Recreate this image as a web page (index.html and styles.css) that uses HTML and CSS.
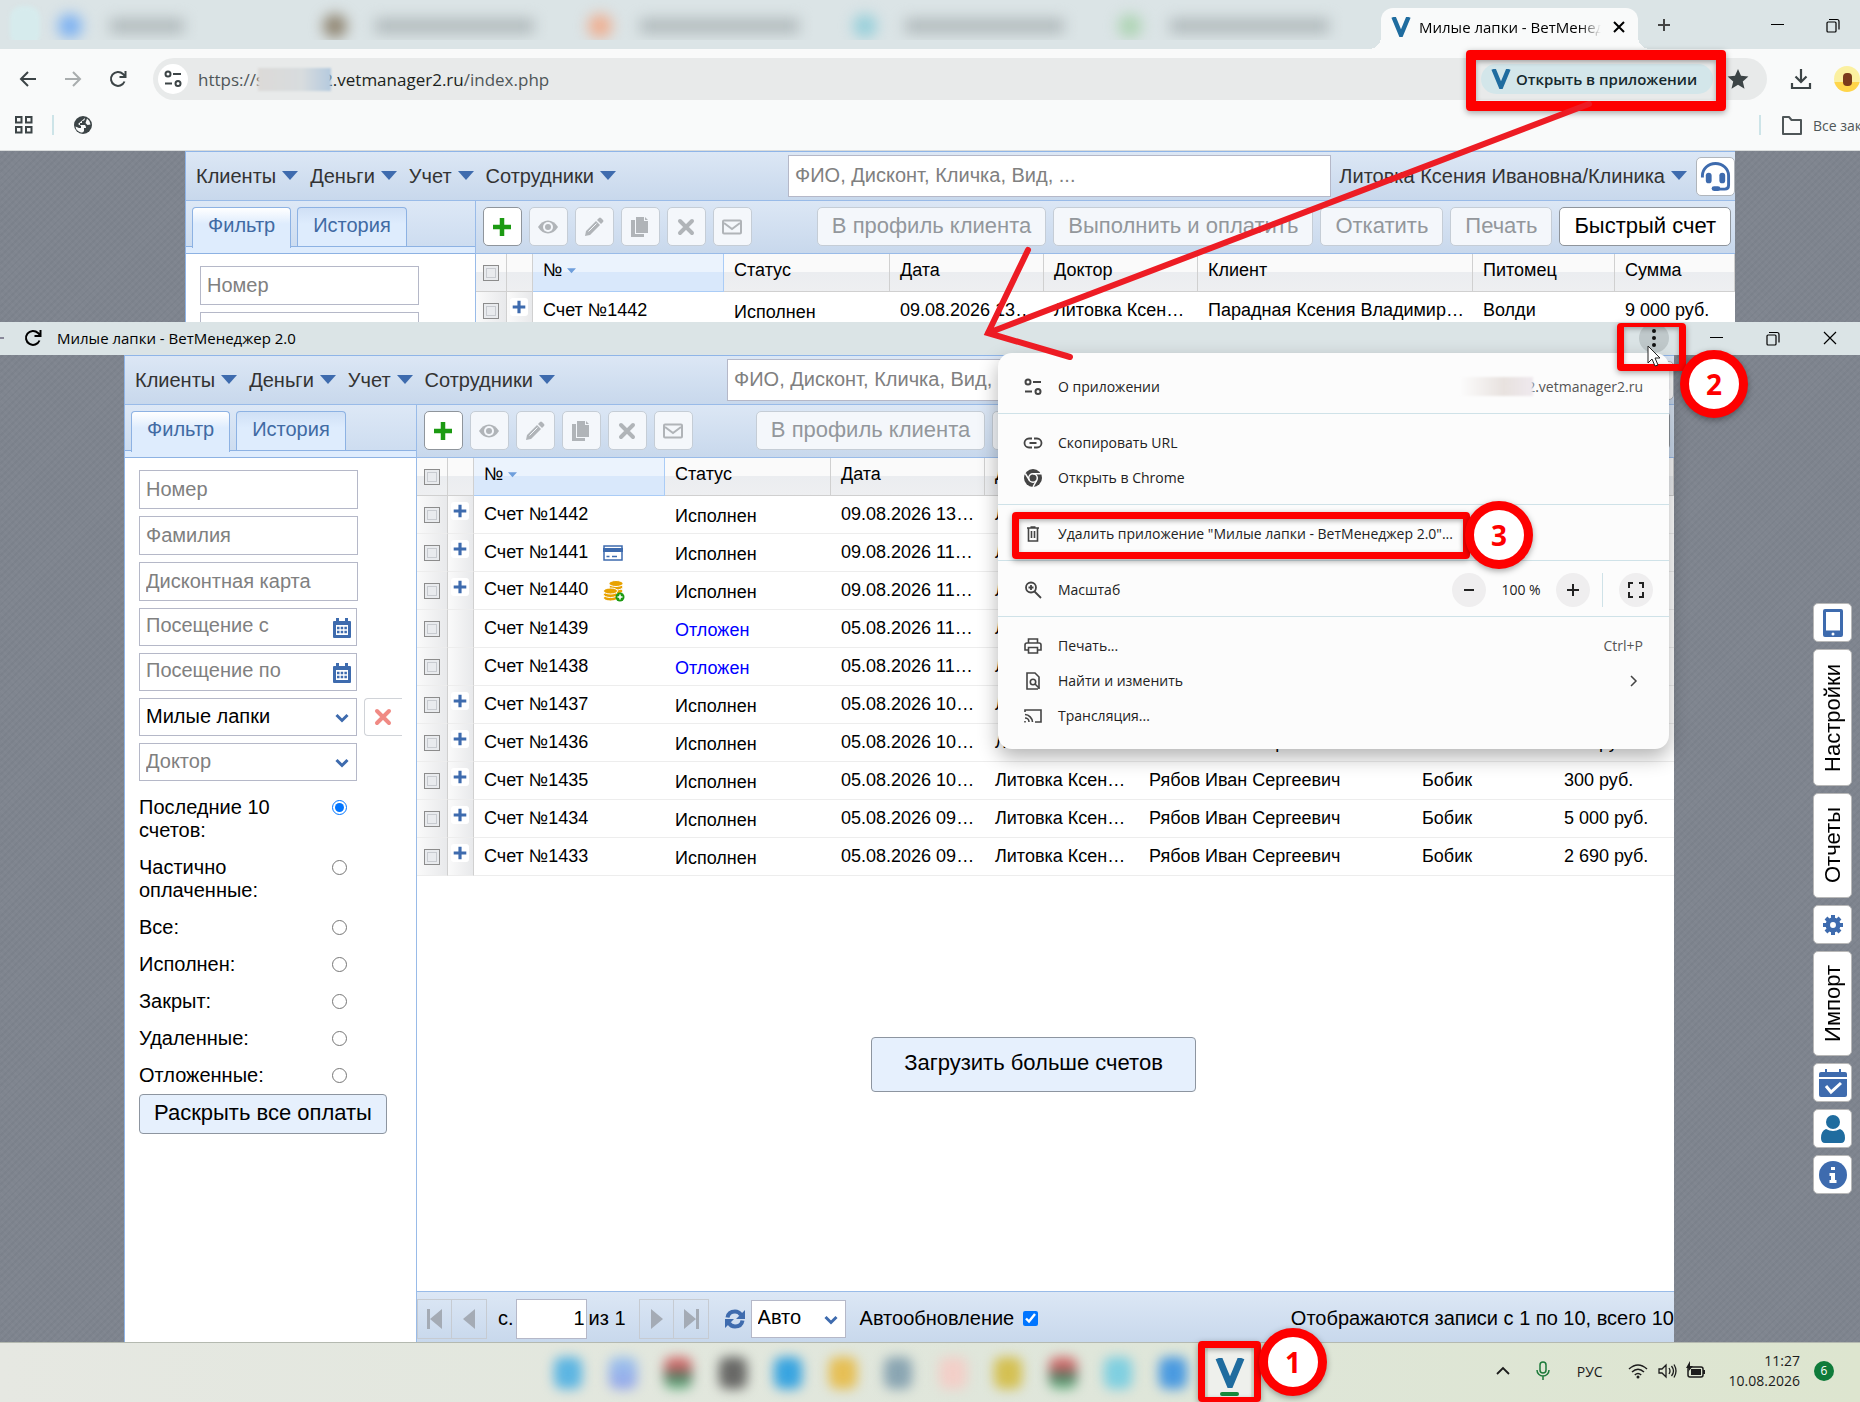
FILE: index.html
```html
<!DOCTYPE html>
<html lang="ru">
<head>
  <meta charset="UTF-8">
  <title>Милые лапки - ВетМенеджер 2.0</title>
  <meta name="viewport" content="width=device-width, initial-scale=1.0">
  <link rel="stylesheet" href="styles.css">
</head>
<body>

  <!-- Иконки -->
  <svg class="sprite" aria-hidden="true">
    <symbol id="i-logo" viewBox="0 0 20 20"><path d="M2.500 0 L10 18 L17.500 0" fill="none" stroke="#1f6c9f" stroke-width="4.500"/></symbol>
    <symbol id="i-back" viewBox="0 0 20 20"><path d="M18 10H3M10 3l-7 7 7 7" fill="none" stroke="currentColor" stroke-width="2"/></symbol>
    <symbol id="i-forward" viewBox="0 0 20 20"><path d="M2 10h15M10 3l7 7-7 7" fill="none" stroke="currentColor" stroke-width="2"/></symbol>
    <symbol id="i-reload" viewBox="0 0 20 20"><path d="M16.500 12.500A7 7 0 1 1 15 5l2 2M17.500 2v6h-6" fill="none" stroke="currentColor" stroke-width="2"/></symbol>
    <symbol id="i-tune" viewBox="0 0 20 20"><g fill="none" stroke="currentColor" stroke-width="2"><circle cx="5" cy="5" r="2.500"/><path d="M10 5h8M2 14.500h7"/><circle cx="15" cy="14.500" r="2.500"/></g></symbol>
    <symbol id="i-close" viewBox="0 0 20 20"><path d="M5 5l10 10M15 5L5 15" stroke="currentColor" stroke-width="2"/></symbol>
    <symbol id="i-plus" viewBox="0 0 20 20"><path d="M10 4v12M4 10h12" stroke="currentColor" stroke-width="2"/></symbol>
    <symbol id="i-minus" viewBox="0 0 20 20"><path d="M5 10h10" stroke="currentColor" stroke-width="2"/></symbol>
    <symbol id="i-min" viewBox="0 0 20 20"><path d="M4 9.500h13" stroke="currentColor"/></symbol>
    <symbol id="i-restore" viewBox="0 0 20 20"><g fill="none" stroke="currentColor" stroke-width="1.200"><rect x="4" y="7" width="9" height="10" rx="1"/><path d="M6 4.500h8q2 0 2 2v8"/></g></symbol>
    <symbol id="i-x" viewBox="0 0 20 20"><path d="M4 4l12 12M16 4L4 16" stroke="currentColor" stroke-width="1.200"/></symbol>
    <symbol id="i-star" viewBox="0 0 24 24"><path d="M12 2l3 6.800 7.400.7-5.600 4.900 1.700 7.300L12 17.800l-6.500 3.900 1.700-7.300L1.600 9.500 9 8.800z" fill="currentColor"/></symbol>
    <symbol id="i-download" viewBox="0 0 24 24"><path d="M12 2v13M6.500 9.500L12 15l5.500-5.500M3 16v5h18v-5" fill="none" stroke="currentColor" stroke-width="2.200"/></symbol>
    <symbol id="i-apps" viewBox="0 0 20 20"><g fill="none" stroke="currentColor" stroke-width="2"><rect x="2" y="2" width="5.500" height="5.500"/><rect x="12" y="2" width="5.500" height="5.500"/><rect x="2" y="12" width="5.500" height="5.500"/><rect x="12" y="12" width="5.500" height="5.500"/></g></symbol>
    <symbol id="i-globe" viewBox="0 0 20 20"><circle cx="10" cy="10" r="9" fill="currentColor"/><path d="M12 3q0 3-3 3v2H7v2h5q1 1 1 3h-2v3q-1 2-3 1.500-5-1.500-5.500-6L6 13h2v-2L5 9M14 3.500q3 2 3.500 6l-3 .5-2-2z" fill="#f9fafa"/></symbol>
    <symbol id="i-folder" viewBox="0 0 24 24"><path d="M3 4h6l2.500 3H21v14H3z" fill="none" stroke="currentColor" stroke-width="2" stroke-linejoin="round"/></symbol>
    <symbol id="i-tri" viewBox="0 0 16 10"><path d="M0 0h16L8 9z" fill="currentColor"/></symbol>
    <symbol id="i-headset" viewBox="0 0 32 32"><g fill="none" stroke="currentColor" stroke-width="3"><path d="M2.500 17v-2a13.500 12.500 0 0 1 27 0v10q0 4-4 4h-7"/></g><rect x="6" y="12" width="6" height="11" rx="3" fill="currentColor"/><rect x="20" y="12" width="6" height="11" rx="3" fill="currentColor"/><rect x="12" y="26" width="9" height="5" rx="2.500" fill="currentColor"/></symbol>
    <symbol id="i-add" viewBox="0 0 20 20"><path d="M10 1v18M1 10h18" stroke="currentColor" stroke-width="4.500"/></symbol>
    <symbol id="i-eye" viewBox="0 0 20 20"><path d="M0 10Q4 3.500 10 3.500T20 10Q16 16.500 10 16.500T0 10z" fill="currentColor"/><circle cx="10" cy="10" r="5" fill="#f4f7fb"/><circle cx="10" cy="10" r="3" fill="currentColor"/></symbol>
    <symbol id="i-pencil" viewBox="0 0 20 20"><path d="M1 19l1-5L12 4l4 4L6 18zM13 3l2-2q1-1 2 0l2 2q1 1 0 2l-2 2z" fill="currentColor"/><path d="M4.500 14.500l8-8" stroke="#f4f7fb"/></symbol>
    <symbol id="i-copy" viewBox="0 0 20 20"><path d="M6 0h8v4h4v12H6z" fill="currentColor"/><path d="M15 0l3 3h-3zM1 3h4v14h9v3H1z" fill="currentColor"/></symbol>
    <symbol id="i-del" viewBox="0 0 20 20"><path d="M4 4l12 12M16 4L4 16" stroke="currentColor" stroke-width="4" stroke-linecap="round"/></symbol>
    <symbol id="i-mail" viewBox="0 0 20 20"><rect x="1" y="3.500" width="18" height="13" rx="1" fill="none" stroke="currentColor" stroke-width="2"/><path d="M2 6l8 6 8-6" fill="none" stroke="currentColor" stroke-width="2"/></symbol>
    <symbol id="i-cal" viewBox="0 0 20 20"><path d="M1 4q0-1 1-1h2V0h3v3h6V0h3v3h2q1 0 1 1v15q0 1-1 1H2q-1 0-1-1z" fill="currentColor"/><path d="M4 7h12v10H4z" fill="#fff"/><path d="M5 10h10M5 14h10" stroke="currentColor" stroke-width="2.500" stroke-dasharray="2.500 1.200"/></symbol>
    <symbol id="i-chev" viewBox="0 0 14 10"><path d="M1.500 2L7 7.500 12.500 2" fill="none" stroke="currentColor" stroke-width="3"/></symbol>
    <symbol id="i-card" viewBox="0 0 20 16"><path d="M1 1h18v14H1z" fill="#fff" stroke="currentColor" stroke-width="1.500"/><path d="M0 3h20v4H0z" fill="currentColor"/><path d="M3.500 11.500h3M9 11.500h5" stroke="currentColor" stroke-width="1.500"/></symbol>
    <symbol id="i-coins" viewBox="0 0 22 22"><g fill="#e8a200" stroke="#fff"><ellipse cx="13" cy="11" rx="7" ry="3"/><ellipse cx="13" cy="7" rx="7" ry="3"/><ellipse cx="13" cy="3.500" rx="7" ry="3"/><ellipse cx="7.500" cy="18" rx="7" ry="3"/><ellipse cx="7.500" cy="14.500" rx="7" ry="3"/><ellipse cx="7.500" cy="11" rx="7" ry="3"/></g><circle cx="17" cy="17" r="4.500" fill="#1c9a12"/><path d="M17 14.500v5M14.500 17h5" stroke="#fff" stroke-width="1.500"/></symbol>
    <symbol id="i-link" viewBox="0 0 20 20"><path d="M9 5.500H6a4.500 4.500 0 0 0 0 9h3M11 5.500h3a4.500 4.500 0 0 1 0 9h-3M6.500 10h7" fill="none" stroke="currentColor" stroke-width="1.800"/></symbol>
    <symbol id="i-chrome" viewBox="0 0 20 20"><circle cx="10" cy="10" r="9" fill="currentColor"/><circle cx="10" cy="10" r="4.300" fill="none" stroke="#fcfcfc" stroke-width="1.500"/><path d="M10 5.700h8M6.300 12.100L2.300 5.500M13.700 12.100L10 19" stroke="#fcfcfc" stroke-width="1.500"/></symbol>
    <symbol id="i-trash" viewBox="0 0 20 20"><g fill="none" stroke="currentColor" stroke-width="1.600"><path d="M4 4h12M7.500 3h5M5.500 4v13h9V4M8.500 7v7M11.500 7v7"/></g></symbol>
    <symbol id="i-zoom" viewBox="0 0 20 20"><g fill="none" stroke="currentColor" stroke-width="1.800"><circle cx="8" cy="7.500" r="5"/><path d="M11.500 11.500L18 18M8 5v5M5.500 7.500h5"/></g></symbol>
    <symbol id="i-full" viewBox="0 0 20 20"><path d="M3 8V3h4M13 3h4v5M17 12v5h-4M7 17H3v-5" fill="none" stroke="currentColor" stroke-width="2"/></symbol>
    <symbol id="i-print" viewBox="0 0 20 20"><g fill="none" stroke="currentColor" stroke-width="1.600"><path d="M5.500 7V3h9v4M5 14H2V9q0-2 2-2h12q2 0 2 2v5h-3"/><path d="M5.500 11.500h9V17h-9z"/></g></symbol>
    <symbol id="i-find" viewBox="0 0 20 20"><g fill="none" stroke="currentColor" stroke-width="1.600"><path d="M15 18H4V2h8l4 4v12"/><circle cx="10" cy="11" r="2.700"/><path d="M12 13l4 4"/></g></symbol>
    <symbol id="i-cast" viewBox="0 0 20 20"><path d="M2 6V4h16v12h-6M2 8.500a8 8 0 0 1 7.500 7.500M2 12a4 4 0 0 1 4 4M2 15v1.500" fill="none" stroke="currentColor" stroke-width="1.600"/></symbol>
    <symbol id="i-phone" viewBox="0 0 20 28"><path fill-rule="evenodd" d="M2 0h16q2 0 2 2v24q0 2-2 2H2q-2 0-2-2V2q0-2 2-2zM3 3v18.500h14V3zM10 23.500a1.500 1.500 0 1 0 0 3 1.500 1.500 0 1 0 0-3z" fill="currentColor"/></symbol>
    <symbol id="i-gear" viewBox="0 0 20 20"><circle cx="10" cy="10" r="5.200" fill="none" stroke="currentColor" stroke-width="4.500"/><path d="M10 0v4M10 16v4M0 10h4M16 10h4M3 3l3 3M14 14l3 3M17 3l-3 3M6 14l-3 3" stroke="currentColor" stroke-width="4"/></symbol>
    <symbol id="i-calcheck" viewBox="0 0 28 28"><path d="M0 8V5q0-2 2-2h4V0h2v3h12V0h2v3h4q2 0 2 2v3zM0 10h28v16q0 2-2 2H2q-2 0-2-2z" fill="currentColor"/><path d="M7 17l5 6 10-9" fill="none" stroke="#fff" stroke-width="3"/></symbol>
    <symbol id="i-user" viewBox="0 0 24 28"><circle cx="12" cy="7" r="7" fill="currentColor"/><path d="M5 14q7 4 14 0 5 2 5 9 0 5-4 5H4q-4 0-4-5 0-7 5-9z" fill="currentColor"/></symbol>
    <symbol id="i-info" viewBox="0 0 28 28"><circle cx="14" cy="14" r="14" fill="currentColor"/><path d="M12 6h4v3h-4zM10.500 12H16v7h1.500v3h-7v-3H12v-4h-1.500z" fill="#fff"/></symbol>
    <symbol id="i-first" viewBox="0 0 20 20"><path d="M2 0h3v20H2zM17 0v20L5 10z" fill="currentColor"/></symbol>
    <symbol id="i-prev" viewBox="0 0 20 20"><path d="M16 0v20L4 10z" fill="currentColor"/></symbol>
    <symbol id="i-next" viewBox="0 0 20 20"><path d="M4 0v20l12-10z" fill="currentColor"/></symbol>
    <symbol id="i-last" viewBox="0 0 20 20"><path d="M15 0h3v20h-3zM3 0v20l12-10z" fill="currentColor"/></symbol>
    <symbol id="i-sync" viewBox="0 0 20 20"><path d="M2.500 8.500q1-6 7.500-6 4 0 6 3.500M17.500 11.500q-1 6-7.500 6-4 0-6-3.500" fill="none" stroke="currentColor" stroke-width="4"/><path d="M20 1v9h-9zM0 19v-9h9z" fill="currentColor"/></symbol>
    <symbol id="i-up" viewBox="0 0 20 20"><path d="M4 13l6-6 6 6" fill="none" stroke="currentColor" stroke-width="1.800"/></symbol>
    <symbol id="i-mic" viewBox="0 0 20 20"><g fill="none" stroke="currentColor" stroke-width="1.500"><rect x="7" y="1" width="6" height="11" rx="3"/><path d="M4 9a6 6 0 0 0 12 0M10 15v4"/></g></symbol>
    <symbol id="i-wifi" viewBox="0 0 20 20"><g fill="none" stroke="currentColor" stroke-width="1.500"><path d="M1 8q9-8 18 0M4 11q6-5.500 12 0M6.800 14q3.200-3 6.400 0"/></g><circle cx="10" cy="16" r="1.500" fill="currentColor"/></symbol>
    <symbol id="i-vol" viewBox="0 0 20 20"><path d="M2 8v4h3l4 4V4L5 8zM12 7q2 3 0 6M14.500 5q4 5 0 10M17 3.500q4 6.500 0 13" fill="none" stroke="currentColor" stroke-width="1.300"/></symbol>
    <symbol id="i-bat" viewBox="0 0 20 20"><rect x="2" y="6" width="15" height="10" rx="2" fill="none" stroke="currentColor" stroke-width="1.500"/><path d="M5 8h10v6H5zM17 9h2v4h-2zM4 0L0 7h3l-1 4 5-6H4z" fill="currentColor"/></symbol>
  </svg>

  <!-- Окно браузера -->
  <header class="tabstrip">
    <div class="blurred-tabs">
      <span class="tab-search"></span>
      <span class="ghost blue"><i></i><b></b></span>
      <span class="ghost brown"><i></i><b></b></span>
      <span class="ghost orange"><i></i><b></b></span>
      <span class="ghost teal"><i></i><b></b></span>
      <span class="ghost green"><i></i><b></b></span>
    </div>
    <div class="tab">
      <svg class="logo"><use href="#i-logo"/></svg>
      <span class="tab-title">Милые лапки - ВетМенеджер 2.0</span>
      <button class="plain" aria-label="Закрыть вкладку"><svg class="ico"><use href="#i-close"/></svg></button>
    </div>
    <button class="plain new-tab" aria-label="Новая вкладка"><svg class="ico"><use href="#i-plus"/></svg></button>
    <div class="win-buttons">
      <button class="plain" aria-label="Свернуть"><svg class="ico"><use href="#i-min"/></svg></button>
      <button class="plain" aria-label="Восстановить"><svg class="ico"><use href="#i-restore"/></svg></button>
    </div>
  </header>

  <div class="toolbar">
    <button class="plain" aria-label="Назад"><svg class="ico"><use href="#i-back"/></svg></button>
    <button class="plain off" aria-label="Вперед"><svg class="ico"><use href="#i-forward"/></svg></button>
    <button class="plain" aria-label="Обновить"><svg class="ico"><use href="#i-reload"/></svg></button>
    <div class="omnibox">
      <button class="site-info" aria-label="Сведения о сайте"><svg class="ico"><use href="#i-tune"/></svg></button>
      <div class="url"><span>https://s</span><span class="smudge"></span><b>2.vetmanager2.ru</b><span>/index.php</span></div>
      <button class="chip">
        <svg class="logo"><use href="#i-logo"/></svg>Открыть в приложении
        <span class="frame frame-chip"></span>
      </button>
      <button class="plain" aria-label="Закладка"><svg class="ico-l"><use href="#i-star"/></svg></button>
    </div>
    <button class="plain download" aria-label="Загрузки"><svg class="ico-l"><use href="#i-download"/></svg></button>
    <span class="avatar"><i></i></span>
  </div>

  <div class="bookmarks">
    <button class="plain" aria-label="Приложения"><svg class="ico"><use href="#i-apps"/></svg></button>
    <span class="vline"></span>
    <button class="plain" aria-label="Сайт"><svg class="ico"><use href="#i-globe"/></svg></button>
    <span class="vline last"></span>
    <a href="#" class="all-marks"><svg class="ico-l"><use href="#i-folder"/></svg>Все закладки</a>
  </div>

  <section class="page page-back">
    <div class="app">
      <div class="menubar">
        <nav class="menu">
          <a href="#">Клиенты<svg class="tri"><use href="#i-tri"/></svg></a>
          <a href="#">Деньги<svg class="tri"><use href="#i-tri"/></svg></a>
          <a href="#">Учет<svg class="tri"><use href="#i-tri"/></svg></a>
          <a href="#">Сотрудники<svg class="tri"><use href="#i-tri"/></svg></a>
        </nav>
        <input class="search" type="text" aria-label="Поиск" placeholder="ФИО, Дисконт, Кличка, Вид, ...">
        <a href="#" class="user">Литовка Ксения Ивановна/Клиника<svg class="tri"><use href="#i-tri"/></svg></a>
        <button class="support" aria-label="Поддержка"><svg><use href="#i-headset"/></svg></button>
      </div>
      <div class="app-body">
        <aside class="side">
          <div class="side-tabs">
            <button class="active">Фильтр</button>
            <button>История</button>
          </div>
          <form class="filter">
            <input class="field" type="text" aria-label="Номер" placeholder="Номер">
            <input class="field" type="text" aria-label="Фамилия">
          </form>
        </aside>
        <main class="main">
          <div class="actions">
            <button class="sq add" aria-label="Добавить"><svg class="ico"><use href="#i-add"/></svg></button>
            <button class="sq" disabled aria-label="Просмотр"><svg class="ico"><use href="#i-eye"/></svg></button>
            <button class="sq" disabled aria-label="Изменить"><svg class="ico"><use href="#i-pencil"/></svg></button>
            <button class="sq" disabled aria-label="Копировать"><svg class="ico"><use href="#i-copy"/></svg></button>
            <button class="sq" disabled aria-label="Удалить"><svg class="ico"><use href="#i-del"/></svg></button>
            <button class="sq" disabled aria-label="Письмо"><svg class="ico"><use href="#i-mail"/></svg></button>
            <div class="actions-right">
              <button disabled>В профиль клиента</button>
              <button disabled>Выполнить и оплатить</button>
              <button disabled>Откатить</button>
              <button disabled>Печать</button>
              <button>Быстрый счет</button>
            </div>
          </div>
          <table class="grid" data-rows="1"></table>
        </main>
      </div>
    </div>
  </section>

  <!-- Окно приложения -->
  <section class="pwa">
    <div class="titlebar">
      <span class="dash"></span>
      <button class="plain" aria-label="Обновить"><svg class="ico"><use href="#i-reload"/></svg></button>
      <span class="title">Милые лапки - ВетМенеджер 2.0</span>
      <button class="dots" aria-label="Меню">
        <i></i><i></i><i></i>
        <span class="frame frame-dots"></span>
        <span class="num num-2">2</span>
        <svg class="cursor" viewBox="0 0 14 22"><path d="M1 1v17l4-4 3 7 3-1-3-7h5z" fill="#fff" stroke="#222"/></svg>
      </button>
      <button class="plain" aria-label="Свернуть"><svg class="ico"><use href="#i-min"/></svg></button>
      <button class="plain" aria-label="Восстановить"><svg class="ico"><use href="#i-restore"/></svg></button>
      <button class="plain" aria-label="Закрыть"><svg class="ico"><use href="#i-x"/></svg></button>
    </div>

    <div class="popup">
      <ul>
        <li><svg class="ico"><use href="#i-tune"/></svg>О приложении<span class="hint"><span class="smudge"></span>2.vetmanager2.ru</span></li>
      </ul>
      <ul>
        <li><svg class="ico"><use href="#i-link"/></svg>Скопировать URL</li>
        <li><svg class="ico"><use href="#i-chrome"/></svg>Открыть в Chrome</li>
      </ul>
      <ul>
        <li><svg class="ico"><use href="#i-trash"/></svg>Удалить приложение "Милые лапки - ВетМенеджер 2.0"...
          <span class="frame frame-item"></span><span class="num num-3">3</span></li>
      </ul>
      <ul>
        <li><svg class="ico"><use href="#i-zoom"/></svg>Масштаб
          <span class="zoom">
            <button aria-label="Уменьшить"><svg class="ico"><use href="#i-minus"/></svg></button>
            <span>100 %</span>
            <button aria-label="Увеличить"><svg class="ico"><use href="#i-plus"/></svg></button>
            <span class="zoom-line"></span>
            <button aria-label="Во весь экран"><svg class="ico"><use href="#i-full"/></svg></button>
          </span></li>
      </ul>
      <ul>
        <li><svg class="ico"><use href="#i-print"/></svg>Печать...<span class="hint">Ctrl+P</span></li>
        <li><svg class="ico"><use href="#i-find"/></svg>Найти и изменить<svg class="more" viewBox="0 0 10 12"><path d="M2 1l5 5-5 5" fill="none" stroke="#444" stroke-width="1.500"/></svg></li>
        <li><svg class="ico"><use href="#i-cast"/></svg>Трансляция...</li>
      </ul>
    </div>

    <div class="page page-front">
      <div class="app">
        <div class="menubar">
          <nav class="menu">
            <a href="#">Клиенты<svg class="tri"><use href="#i-tri"/></svg></a>
            <a href="#">Деньги<svg class="tri"><use href="#i-tri"/></svg></a>
            <a href="#">Учет<svg class="tri"><use href="#i-tri"/></svg></a>
            <a href="#">Сотрудники<svg class="tri"><use href="#i-tri"/></svg></a>
          </nav>
          <input class="search" type="text" aria-label="Поиск" placeholder="ФИО, Дисконт, Кличка, Вид, ...">
          <a href="#" class="user">Литовка Ксения Ивановна/Клиника<svg class="tri"><use href="#i-tri"/></svg></a>
          <button class="support" aria-label="Поддержка"><svg><use href="#i-headset"/></svg></button>
        </div>
        <div class="app-body">
          <aside class="side">
            <div class="side-tabs">
              <button class="active">Фильтр</button>
              <button>История</button>
            </div>
            <form class="filter">
              <input class="field" type="text" aria-label="Номер" placeholder="Номер">
              <input class="field" type="text" aria-label="Фамилия" placeholder="Фамилия">
              <input class="field" type="text" aria-label="Дисконтная карта" placeholder="Дисконтная карта">
              <div class="combo"><input class="field" type="text" aria-label="Посещение с" placeholder="Посещение с"><svg class="cal"><use href="#i-cal"/></svg></div>
              <div class="combo"><input class="field" type="text" aria-label="Посещение по" placeholder="Посещение по"><svg class="cal"><use href="#i-cal"/></svg></div>
              <div class="clinic">
                <div class="combo"><select class="field" aria-label="Клиника"><option>Милые лапки</option></select><svg class="chev"><use href="#i-chev"/></svg></div>
                <button type="button" class="clear" aria-label="Сбросить"><svg class="ico"><use href="#i-del"/></svg></button>
              </div>
              <div class="combo"><select class="field empty" aria-label="Доктор"><option>Доктор</option></select><svg class="chev"><use href="#i-chev"/></svg></div>
              <div class="radios">
                <label><span>Последние 10 счетов:</span><input type="radio" name="state" checked></label>
                <label><span>Частично оплаченные:</span><input type="radio" name="state"></label>
                <label><span>Все:</span><input type="radio" name="state"></label>
                <label><span>Исполнен:</span><input type="radio" name="state"></label>
                <label><span>Закрыт:</span><input type="radio" name="state"></label>
                <label><span>Удаленные:</span><input type="radio" name="state"></label>
                <label><span>Отложенные:</span><input type="radio" name="state"></label>
              </div>
              <button type="button" class="expand-all">Раскрыть все оплаты</button>
            </form>
          </aside>
          <main class="main">
            <div class="actions">
              <button class="sq add" aria-label="Добавить"><svg class="ico"><use href="#i-add"/></svg></button>
              <button class="sq" disabled aria-label="Просмотр"><svg class="ico"><use href="#i-eye"/></svg></button>
              <button class="sq" disabled aria-label="Изменить"><svg class="ico"><use href="#i-pencil"/></svg></button>
              <button class="sq" disabled aria-label="Копировать"><svg class="ico"><use href="#i-copy"/></svg></button>
              <button class="sq" disabled aria-label="Удалить"><svg class="ico"><use href="#i-del"/></svg></button>
              <button class="sq" disabled aria-label="Письмо"><svg class="ico"><use href="#i-mail"/></svg></button>
              <div class="actions-right">
                <button disabled>В профиль клиента</button>
                <button disabled>Выполнить и оплатить</button>
                <button disabled>Откатить</button>
                <button disabled>Печать</button>
                <button>Быстрый счет</button>
              </div>
            </div>
            <table class="grid" data-rows="10"></table>
            <div class="load-more"><button>Загрузить больше счетов</button></div>
            <div class="pager">
              <button class="pg" disabled aria-label="Первая"><svg class="ico"><use href="#i-first"/></svg></button>
              <button class="pg" disabled aria-label="Назад"><svg class="ico"><use href="#i-prev"/></svg></button>
              <label class="pg-label" for="pg">с.</label>
              <input id="pg" type="text" value="1">
              <span class="pg-of">из 1</span>
              <button class="pg" disabled aria-label="Вперед"><svg class="ico"><use href="#i-next"/></svg></button>
              <button class="pg" disabled aria-label="Последняя"><svg class="ico"><use href="#i-last"/></svg></button>
              <button class="plain sync" aria-label="Обновить"><svg class="ico"><use href="#i-sync"/></svg></button>
              <div class="combo auto"><select class="field" aria-label="Интервал"><option>Авто</option></select><svg class="chev"><use href="#i-chev"/></svg></div>
              <label class="auto-label">Автообновление<input type="checkbox" checked></label>
              <span class="total">Отображаются записи с 1 по 10, всего 10</span>
            </div>
          </main>
        </div>
      </div>
      <div class="rail">
        <button aria-label="Мобильная версия"><svg class="w20"><use href="#i-phone"/></svg></button>
        <button class="r-settings"><span>Настройки</span></button>
        <button class="r-text"><span>Отчеты</span></button>
        <button aria-label="Сервис"><svg class="w20"><use href="#i-gear"/></svg></button>
        <button class="r-text"><span>Импорт</span></button>
        <button aria-label="Календарь"><svg><use href="#i-calcheck"/></svg></button>
        <button aria-label="Профиль" class="teal"><svg><use href="#i-user"/></svg></button>
        <button aria-label="Справка"><svg><use href="#i-info"/></svg></button>
      </div>
    </div>
  </section>

  <!-- Панель задач -->
  <footer class="taskbar">
    <div class="task-icons">
      <i class="c1"></i><i class="c2"></i><i class="c3"></i><i class="c4"></i><i class="c5"></i><i class="c6"></i>
      <i class="c7"></i><i class="c8"></i><i class="c9"></i><i class="c3"></i><i class="c10"></i><i class="c11"></i>
    </div>
    <button class="task-app" aria-label="ВетМенеджер">
      <svg><use href="#i-logo"/></svg><span class="bar"></span>
      <span class="frame frame-task"></span><span class="num num-1">1</span>
    </button>
    <div class="tray">
      <svg class="ico"><use href="#i-up"/></svg>
      <svg class="ico mic"><use href="#i-mic"/></svg>
      <span class="lang">РУС</span>
      <svg class="ico"><use href="#i-wifi"/></svg>
      <svg class="ico"><use href="#i-vol"/></svg>
      <svg class="ico"><use href="#i-bat"/></svg>
      <span class="clock">11:27<br>10.08.2026</span>
      <span class="badge">6</span>
    </div>
  </footer>

  <svg class="arrow" viewBox="0 0 620 270"><path d="M611 14L10 243M50 160L10 243l82 24"/></svg>

  <script>
    // счета: номер, статус, дата, клиент, питомец, сумма, иконка
    const bills = [
      [1442, 'Исполнен', '09.08.2026 13:20', 'Парадная Ксения Владимировна', 'Волди', '9 000 руб.'],
      [1441, 'Исполнен', '09.08.2026 11:52', 'Парадная Ксения Владимировна', 'Волди', '1 200 руб.', 'card'],
      [1440, 'Исполнен', '09.08.2026 11:40', 'Парадная Ксения Владимировна', 'Волди', '700 руб.', 'coins'],
      [1439, 'Отложен',  '05.08.2026 11:31', 'Рябов Иван Сергеевич', 'Бобик', '500 руб.'],
      [1438, 'Отложен',  '05.08.2026 11:12', 'Рябов Иван Сергеевич', 'Бобик', '500 руб.'],
      [1437, 'Исполнен', '05.08.2026 10:48', 'Рябов Иван Сергеевич', 'Бобик', '450 руб.'],
      [1436, 'Исполнен', '05.08.2026 10:30', 'Рябов Иван Сергеевич', 'Бобик', '300 руб.'],
      [1435, 'Исполнен', '05.08.2026 10:15', 'Рябов Иван Сергеевич', 'Бобик', '300 руб.'],
      [1434, 'Исполнен', '05.08.2026 09:50', 'Рябов Иван Сергеевич', 'Бобик', '5 000 руб.'],
      [1433, 'Исполнен', '05.08.2026 09:30', 'Рябов Иван Сергеевич', 'Бобик', '2 690 руб.']
    ];

    const head = `<colgroup><col class="c-check"><col class="c-exp"><col class="c-num"><col class="c-status">
      <col class="c-date"><col class="c-date"><col><col class="c-pet"><col class="c-sum"></colgroup>
      <thead><tr><th><input type="checkbox" aria-label="Выбрать все"></th><th></th>
      <th class="sorted">№<svg><use href="#i-tri"/></svg></th><th>Статус</th><th>Дата</th><th>Доктор</th>
      <th>Клиент</th><th>Питомец</th><th>Сумма</th></tr></thead>`;

    function row([num, status, date, client, pet, sum, icon]) {
      const later = status === 'Отложен';
      const plus = later ? '' : '<button class="exp" aria-label="Раскрыть"><svg><use href="#i-add"/></svg></button>';
      const mark = icon ? `<svg class="${icon}"><use href="#i-${icon}"/></svg>` : '';
      return `<tr><td class="tool"><input type="checkbox" aria-label="Счет ${num}"></td><td class="tool">${plus}</td>
        <td>Счет №${num}${mark}</td><td class="status${later ? ' later' : ''}">${status}</td><td>${date}</td>
        <td>Литовка Ксения Ивановна</td><td class="client">${client}</td><td>${pet}</td><td>${sum}</td></tr>`;
    }

    document.querySelectorAll('.grid').forEach(t => {
      t.innerHTML = head + '<tbody>' + bills.slice(0, t.dataset.rows).map(row).join('') + '</tbody>';
    });
  </script>

</body>
</html>
```
FILE: styles.css
```css
* { box-sizing: border-box; }
body {
  margin: 0;
  min-height: 100vh;
  display: flex;
  flex-direction: column;
  position: relative;
  overflow-x: hidden;
  font-family: "Liberation Sans", Arial, sans-serif;
  font-size: 20px;
  color: #000;
  background: #7f858f;
}
button, input, select { font-family: inherit; font-size: inherit; color: inherit; margin: 0; }
button { cursor: pointer; }
a { color: inherit; text-decoration: none; }
svg { display: block; flex: none; }
.sprite { position: absolute; width: 0; height: 0; }
.ico { width: 20px; height: 20px; }
.ico-l { width: 24px; height: 24px; }
.logo { width: 20px; height: 20px; }
.plain { border: 0; padding: 0; background: none; display: flex; flex: none; }

/* Вкладки браузера */
.tabstrip {
  height: 49px;
  display: flex;
  align-items: center;
  background: #dbe4e6;
  font-family: "Open Sans", sans-serif;
  font-size: 15px;
}
.blurred-tabs {
  flex: 1;
  height: 40px;
  align-self: flex-start;
  overflow: hidden;
  display: flex;
  align-items: center;
  padding: 12px 0 0 10px;
}
.tab-search { width: 30px; height: 40px; margin-right: 16px; border-radius: 12px; background: #d6ebed; filter: blur(2px); }
.ghost { flex: 1; display: flex; align-items: center; gap: 28px; filter: blur(7px); }
.ghost i { width: 24px; height: 24px; margin-left: 2px; border-radius: 50%; background: #7ab0f2; }
.ghost b { width: 60%; height: 16px; background: #b3bcbe; }
.ghost.blue b { width: 28%; }
.ghost.brown i { background: #8f8470; }
.ghost.orange i { background: #efae90; }
.ghost.teal i { background: #97cfda; }
.ghost.green i { background: #aed4b4; }
.tab {
  position: relative;
  width: 257px;
  height: 41px;
  align-self: flex-end;
  display: flex;
  align-items: center;
  gap: 8px;
  padding: 0 9px 4px 10px;
  border-radius: 12px 12px 0 0;
  background: #f9fafa;
}
.tab::before, .tab::after {
  content: '';
  position: absolute;
  bottom: 0;
  width: 12px;
  height: 12px;
}
.tab::before { left: -12px; background: radial-gradient(circle at 0 0, transparent 12px, #f9fafa 12px); }
.tab::after { right: -12px; background: radial-gradient(circle at 100% 0, transparent 12px, #f9fafa 12px); }
.tab-title {
  flex: 1;
  white-space: nowrap;
  overflow: hidden;
  mask-image: linear-gradient(90deg, #000 88%, transparent);
}
.new-tab { margin-left: 16px; color: #444; }
.win-buttons { margin: 0 17px 0 auto; padding-left: 93px; display: flex; gap: 36px; }

/* Адресная строка */
.toolbar {
  display: flex;
  align-items: center;
  padding: 9px 0 0 18px;
  background: #f9fafa;
  color: #3c4446;
}
.toolbar > .plain { margin-right: 25px; }
.toolbar > .plain.off { color: #a9adae; }
.omnibox {
  flex: 1;
  height: 42px;
  display: flex;
  align-items: center;
  padding: 0 17px 0 5px;
  border-radius: 21px;
  background: #e8eaea;
  font-family: "Open Sans", sans-serif;
}
.site-info {
  width: 30px;
  height: 30px;
  padding: 5px;
  border: 0;
  border-radius: 50%;
  background: #fff;
}
.url { flex: 1; display: flex; margin-left: 10px; font-size: 17px; color: #4f5658; }
.url b { font-weight: normal; color: #1b1f20; }
.smudge {
  position: relative;
  z-index: 1;
  width: 73px;
  margin: 0 -6px 0 -6px;
  background: linear-gradient(90deg, #dcdad8, #d8dcde 60%, #b5cade);
  filter: blur(1px);
}
.url .smudge { margin-right: -8px; }
.chip {
  position: relative;
  width: 232px;
  height: 30px;
  margin-right: 13px;
  display: flex;
  align-items: center;
  gap: 5px;
  padding: 0 0 0 10px;
  border: 0;
  border-radius: 15px;
  background: #d3e6ea;
  font-size: 15px;
  font-weight: 600;
  color: #15282d;
  white-space: nowrap;
}
.toolbar > .plain.download { margin: 0 21px 0 22px; }
.avatar {
  width: 26px;
  height: 26px;
  border-radius: 50%;
  background: linear-gradient(#fbf0a0 60%, #ffd54a 60%);
  display: flex;
  justify-content: center;
  align-items: center;
}
.avatar i { width: 9px; height: 13px; border-radius: 4px; background: #7a3a1c; }

.bookmarks {
  height: 51px;
  display: flex;
  align-items: center;
  padding-left: 14px;
  background: #f9fafa;
  color: #3c4446;
  border-bottom: 1px solid #d9dcdc;
  font-family: "Open Sans", sans-serif;
  font-size: 14px;
}
.vline { width: 2px; height: 20px; margin: 0 19px 0 18px; background: #cde4e8; }
.vline.last { margin: 0 19px 0 auto; }
.all-marks { flex: 0 0 80px; min-width: 0; display: flex; align-items: center; gap: 9px; white-space: nowrap; color: #4f5658; }

/* Страница клиники */
.page {
  display: flex;
  background:
    repeating-linear-gradient(45deg, rgba(255, 255, 255, .02) 0 2px, transparent 2px 5px),
    repeating-linear-gradient(-45deg, rgba(0, 0, 0, .03) 0 2px, transparent 2px 5px),
    #7f858f;
}
.page-back { height: 171px; overflow: hidden; padding: 0 125px 0 185px; }
.page-front { flex: 1; padding-left: 124px; }
.app {
  flex: 1;
  min-width: 0;
  display: flex;
  flex-direction: column;
  border-left: 1px solid #8fb5e8;
  background: #fff;
}
.menubar {
  flex: none;
  height: 50px;
  display: flex;
  align-items: center;
  border-top: 1px solid #8fb5e8;
  border-bottom: 1px solid #99bbe8;
  background: linear-gradient(#dce7f5, #c8d8ec);
  color: #333;
}
.menu { flex: 0 0 602px; display: flex; gap: 12px; padding-left: 10px; }
.menu a, .user { display: flex; align-items: center; gap: 6px; white-space: nowrap; }
.tri { width: 16px; height: 10px; color: #3e6bae; }
.search {
  flex: 1;
  min-width: 0;
  height: 42px;
  padding: 0 6px 2px;
  border: 1px solid #b5b8c8;
  background: #fff;
}
::placeholder { color: #808080; opacity: 1; }
.user { margin: 0 9px 0 8px; }
.support {
  width: 39px;
  height: 39px;
  padding: 3px;
  border: 1px solid #b0b5bb;
  border-radius: 5px;
  background: #fff;
  color: #3e6bae;
}
.support svg { width: 31px; height: 31px; }
.app-body { flex: 1; display: flex; }

/* Фильтр */
.side { flex: 0 0 290px; border-right: 1px solid #99bbe8; }
.side-tabs {
  position: relative;
  height: 53px;
  display: flex;
  gap: 6px;
  padding: 6px 6px 0;
  background: linear-gradient(#dde8f6, #cbdbef);
  border-bottom: 1px solid #8db2e3;
}
.side-tabs::after {
  content: '';
  position: absolute;
  left: 0; right: 0; bottom: 0;
  height: 6px;
  background: #deecfd;
  border-top: 1px solid #8db2e3;
}
.side-tabs button {
  height: 41px;
  padding: 0 15px 6px;
  border: 1px solid #8db2e3;
  border-bottom: 0;
  border-radius: 4px 4px 0 0;
  background: linear-gradient(#d0e0f5, #deecfd 40%);
  color: #416aa3;
}
.side-tabs .active { position: relative; z-index: 1; background: linear-gradient(#fff, #deecfd 40%); }
.filter { display: flex; flex-direction: column; align-items: flex-start; gap: 7px; padding: 12px 14px; }
.field {
  width: 219px;
  height: 39px;
  padding: 0 6px;
  border: 1px solid #b5b8c8;
  border-radius: 0;
  background: #fff;
  appearance: none;
}
.combo { position: relative; }
.combo .field { width: 218px; height: 38px; display: block; padding-bottom: 3px; }
.combo svg { position: absolute; pointer-events: none; color: #3e6bae; }
.cal { width: 20px; height: 20px; right: 5px; top: 10px; }
.chev { width: 14px; height: 10px; right: 8px; top: 15px; }
.empty { color: #808080; }
.clinic { display: flex; gap: 7px; }
.clear {
  width: 38px;
  height: 38px;
  padding: 8px;
  border: 1px solid #d0d3d8;
  border-right: 0;
  border-radius: 4px 0 0 4px;
  background: #fff;
  color: #f08a84;
}
.radios { display: flex; flex-direction: column; gap: 14px; margin-top: 8px; }
.radios label { display: flex; align-items: flex-start; line-height: 23px; }
.radios span { width: 150px; margin-right: 43px; }
.radios input { width: 15px; height: 15px; margin: 4px 0 0; }
.expand-all, .load-more button {
  border: 1px solid #8d95a0;
  border-radius: 4px;
  background: #e6f0fd;
  font-size: 22px;
}
.expand-all { height: 40px; padding: 0 14px 2px; }

/* Кнопки над таблицей */
.main { flex: 1; min-width: 0; display: flex; flex-direction: column; }
.actions {
  flex: none;
  height: 53px;
  display: flex;
  gap: 7px;
  padding: 6px 4px 0 7px;
  border-bottom: 1px solid #99bbe8;
  background: linear-gradient(#dce7f5, #c8d8ec);
}
.actions button {
  height: 39px;
  padding: 0 14px 2px;
  border: 1px solid #8f959c;
  border-radius: 5px;
  background: #fff;
  font-size: 22px;
  white-space: nowrap;
}
.actions button:disabled { color: #93979c; border-color: #c5cdd6; background: #f4f7fb; }
.actions .sq { flex: 0 0 39px; padding: 0 8px; }
.actions .sq:disabled { color: #b0b4b8; }
.actions .add { color: #1c9a12; }
.actions-right { margin-left: auto; display: flex; gap: 7px; }

/* Таблица счетов */
.grid { width: 100%; table-layout: fixed; border-collapse: separate; border-spacing: 0; font-size: 18px; }
.c-check { width: 31px; }
.c-exp { width: 26px; }
.c-num { width: 191px; }
.c-status { width: 166px; }
.c-date { width: 154px; }
.c-pet { width: 142px; }
.c-sum { width: 120px; }
.grid th {
  height: 38px;
  padding: 0 10px 4px;
  border-right: 1px solid #d0d0d0;
  border-bottom: 1px solid #d0d0d0;
  background: linear-gradient(#fafafa 50%, #ebedf0 50%, #eeeff1);
  font-weight: normal;
  text-align: left;
}
.grid th.sorted { background: linear-gradient(#ebf3fd 50%, #d9e8fb 50%); border-color: #aaccf6; }
.sorted svg { display: inline-block; width: 9px; height: 6px; margin: 0 0 2px 5px; color: #6f9fdc; }
.grid td {
  height: 38px;
  padding: 0 10px;
  border-bottom: 1px solid #ededed;
  white-space: nowrap;
  overflow: hidden;
  text-overflow: ellipsis;
}
.grid .client { padding-right: 4px; }
.grid .status { padding-top: 4px; }
.grid .later { color: #0000ff; }
.grid .tool, .grid th:nth-child(-n+2) { padding: 0 0 0 7px; border-right: 1px solid #d0d0d0; }
.grid .tool { background: linear-gradient(90deg, #fafafa, #e8e9eb); }
.grid .tool + .tool { padding-left: 3px; vertical-align: top; }
.grid input {
  display: block;
  width: 16px;
  height: 16px;
  appearance: none;
  border: 1px solid #8c8c8c;
  outline: 1px solid #c8cbd0;
  outline-offset: -4px;
  background: #e9ebee;
}
.exp { display: block; width: 18px; height: 18px; margin-top: 6px; padding: 2px; border: 0; border-radius: 3px; background: #fff; }
.exp svg { width: 14px; height: 14px; color: #3e6bae; }
.card, .coins { display: inline-block; vertical-align: middle; margin-left: 15px; color: #3e6bae; }
.card { width: 20px; height: 16px; }
.coins { width: 22px; height: 22px; }
.load-more { flex: 1; padding: 161px 24px 0 0; text-align: center; }
.load-more button { height: 55px; padding: 0 32px 3px; }

/* Постраничная навигация */
.pager {
  height: 51px;
  display: flex;
  align-items: center;
  padding-top: 3px;
  border-top: 1px solid #99bbe8;
  background: linear-gradient(#dce7f5, #c8d8ec);
}
.pg { width: 35px; height: 40px; padding: 0 7px; border: 1px solid #c6cbd2; background: none; color: #a4abb5; }
.pg + .pg { border-left: 0; }
.pg-label { margin: 0 2px 0 11px; }
#pg { width: 71px; height: 40px; padding: 0 1px; border: 1px solid #b5b8c8; background: #fff; text-align: right; }
.pg-of { margin: 0 13px 0 2px; }
.sync { margin: 0 6px 0 16px; color: #3e6bae; }
.auto .field { width: 95px; }
.auto-label { display: flex; align-items: center; gap: 9px; margin-left: 14px; }
.auto-label input { width: 15px; height: 15px; }
.total { margin-left: auto; white-space: nowrap; }

/* Боковые кнопки справа */
.rail {
  flex: 0 0 186px;
  display: flex;
  flex-direction: column;
  align-items: flex-end;
  gap: 7px;
  padding: 248px 8px 0 0;
}
.rail button {
  width: 39px;
  height: 39px;
  padding: 0;
  display: flex;
  align-items: center;
  justify-content: center;
  border: 1px solid #b8b8b8;
  border-radius: 5px;
  background: #fff;
  color: #3e6bae;
}
.rail svg { width: 28px; height: 28px; }
.rail .w20 { width: 20px; }
.rail .teal { color: #1f6c9f; }
.rail .r-text { height: 105px; color: #000; }
.rail .r-settings { height: 137px; color: #000; }
.rail span { writing-mode: vertical-rl; transform: rotate(180deg); font-size: 22px; }

/* Окно приложения */
.pwa { position: relative; flex: 1; display: flex; flex-direction: column; }
.titlebar {
  height: 33px;
  display: flex;
  align-items: center;
  padding: 0 20px 2px 0;
  background: #dbe4e6;
  font-family: "Open Sans", sans-serif;
  font-size: 15px;
}
.dash { width: 4px; height: 2px; margin-right: 19px; background: #889; }
.title { flex: 1; margin-left: 14px; }
.dots {
  position: relative;
  width: 30px;
  height: 30px;
  padding: 0;
  display: flex;
  flex-direction: column;
  align-items: center;
  justify-content: center;
  gap: 3px;
  border: 0;
  border-radius: 50%;
  background: #bfc8ca;
}
.dots i { width: 4px; height: 4px; border-radius: 50%; background: #111; }
.titlebar > .dots ~ .plain { margin-left: 37px; }
.cursor { position: absolute; z-index: 11; left: 8px; top: 22px; width: 14px; height: 22px; }

.popup {
  position: absolute;
  z-index: 5;
  top: 31px;
  right: 191px;
  width: 671px;
  padding: 5px 0 7px;
  border-radius: 14px;
  background: #fcfcfc;
  box-shadow: 0 8px 20px rgba(0, 0, 0, .3);
  font-family: "Open Sans", sans-serif;
  font-size: 14px;
  color: #222;
}
.popup ul { list-style: none; margin: 0; padding: 11px 0 9px; border-bottom: 1px solid #cfe2e8; }
.popup ul:last-child { border: 0; }
.popup li { position: relative; height: 35px; display: flex; align-items: center; padding: 0 26px 0 25px; }
.popup li > .ico { margin-right: 15px; color: #444; }
.hint { display: flex; margin-left: auto; color: #555; }
.hint .smudge { background: linear-gradient(90deg, #fcfcfc, #e8e2df 60%, #efe9ee); }
.more { width: 10px; height: 12px; margin: 0 4px 0 auto; }
.zoom { display: flex; align-items: center; margin: 0 -10px 0 auto; }
.zoom button { width: 34px; height: 34px; padding: 7px; border: 0; border-radius: 50%; background: #efeeef; }
.zoom > span:nth-child(2) { width: 70px; text-align: center; }
.zoom .zoom-line { width: 1px; height: 34px; margin: 0 16px 0 12px; background: #cfe2e8; }

/* Красные пометки */
.frame {
  position: absolute;
  z-index: 10;
  border: 7px solid #fe0000;
  border-radius: 4px;
  box-shadow: 0 2px 6px rgba(0, 0, 0, .35), inset 0 2px 5px rgba(0, 0, 0, .3);
}
.frame-chip { inset: -14px -13px -17px -15px; border-width: 10px; }
.frame-dots { inset: 0 -17px -18px -22px; border-top-width: 4px; }
.frame-item { left: 14px; top: -4px; width: 458px; height: 47px; }
.frame-task { inset: -2px -10px 0; border-bottom-width: 5px; }
.num {
  position: absolute;
  z-index: 10;
  width: 68px;
  height: 68px;
  display: flex;
  align-items: center;
  justify-content: center;
  border: 9px solid #fe0000;
  border-radius: 50%;
  background: #fff;
  box-shadow: 0 2px 6px rgba(0, 0, 0, .35);
  font-family: "Open Sans", sans-serif;
  font-size: 28px;
  font-weight: 700;
  color: #fe0000;
}
.num-1 { left: 51px; top: -15px; }
.num-2 { left: 41px; top: 27px; }
.num-3 { left: 467px; top: -15px; }
.arrow {
  position: absolute;
  z-index: 12;
  top: 90px;
  right: 262px;
  width: 620px;
  height: 270px;
  fill: none;
  stroke: #ed1c24;
  stroke-width: 6;
  stroke-linecap: round;
}

/* Панель задач */
.taskbar {
  height: 60px;
  display: flex;
  align-items: stretch;
  border-top: 1px solid #b4b9b0;
  background: linear-gradient(90deg, #e6e8e2, #dfe6da 60%, #dde5cf);
  font-family: "Open Sans", sans-serif;
  font-size: 14px;
}
.task-icons {
  flex: 1;
  display: flex;
  align-items: center;
  justify-content: flex-end;
  gap: 27px;
  margin-right: 21px;
  filter: blur(6px);
}
.task-icons i { width: 28px; height: 32px; border-radius: 8px; }
.c1 { background: #5cb5e2; }
.c2 { background: linear-gradient(#9cc4ec, #93a4ea); }
.c3 { background: linear-gradient(#d06a6a 35%, #5a6a5c 50%, #6cc08a); }
.c4 { background: #686866; }
.c5 { background: #38a4e0; }
.c6 { background: #e6bf55; }
.c7 { background: #8aa5b2; }
.c8 { background: #f2cfc8; }
.c9 { background: #d4c052; }
.c10 { background: #7fcfe0; }
.c11 { background: #4a9ae0; }
.task-app {
  position: relative;
  width: 43px;
  padding: 15px 0 0;
  display: flex;
  flex-direction: column;
  align-items: center;
  justify-content: flex-start;
  gap: 4px;
  border: 0;
  background: #eef0ec;
}
.task-app > svg { width: 30px; height: 30px; }
.bar { width: 19px; height: 4px; border-radius: 2px; background: #168a3c; }
.tray {
  flex: 0 0 609px;
  display: flex;
  align-items: center;
  justify-content: flex-end;
  gap: 9px;
  padding: 0 26px 3px 0;
  color: #1c1c1c;
}
.tray .mic { margin-left: 11px; color: #1d7a3a; }
.lang { margin: 0 16px 0 15px; }
.clock { margin: 0 5px 0 14px; text-align: right; line-height: 20px; }
.badge {
  width: 20px;
  height: 20px;
  border-radius: 50%;
  background: #0f7b3a;
  color: #fff;
  font-size: 12px;
  line-height: 20px;
  text-align: center;
}
```
